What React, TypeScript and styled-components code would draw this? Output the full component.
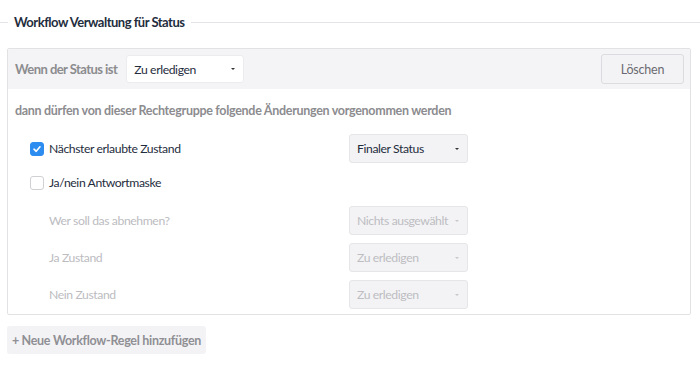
import React from "react";
import styled, { createGlobalStyle } from "styled-components";

const Global = createGlobalStyle`
  html, body { margin: 0; padding: 0; background: #fff; }
  body { font-family: Lato, "Open Sans", sans-serif; color: #1f2d3d; }
  * { box-sizing: border-box; }
`;

const Page = styled.div`
  width: 700px;
  height: 367px;
  padding-top: 14px;
  display: flex;
  flex-direction: column;
`;

const Legend = styled.div`
  display: flex;
  align-items: center;
  height: 16px;
  gap: 6px;
  &::before {
    content: "";
    width: 8px;
    height: 1px;
    background: #e4e4e7;
  }
  &::after {
    content: "";
    flex: 1;
    height: 1px;
    background: #e4e4e7;
  }
`;

const LegendText = styled.span`
  font-weight: 700;
  font-size: 13px;
  color: #1f2d3d;
  letter-spacing: -0.5px;
`;

const Panel = styled.div`
  margin: 18px 9px 0 7px;
  border: 1px solid #e2e2e5;
  border-radius: 2px;
  height: 267px;
  display: flex;
  flex-direction: column;
`;

const Header = styled.div`
  height: 40px;
  background: #f4f4f6;
  display: flex;
  align-items: center;
  padding: 0 6px 0 7px;
  gap: 9px;
`;

const HeaderLabel = styled.span`
  font-weight: 700;
  font-size: 13px;
  color: #8c8c8f;
  letter-spacing: -0.55px;
`;

const Select = styled.div<{ $variant?: "white" | "grey" | "disabled" }>`
  width: ${(p) => (p.$variant === "white" ? "118px" : "119px")};
  height: ${(p) => (p.$variant === "white" ? "28px" : "29px")};
  border-radius: 3px;
  border: 1px solid ${(p) => (p.$variant === "white" ? "#ececef" : "#e6e6e9")};
  background: ${(p) => (p.$variant === "white" ? "#fff" : "#f3f3f5")};
  color: ${(p) => (p.$variant === "disabled" ? "#bdbdc2" : "#1f2d3d")};
  font-size: 12.2px;
  display: flex;
  align-items: center;
  justify-content: space-between;
  padding: 0 8px 0 7px;
  letter-spacing: -0.4px;
  white-space: nowrap;
  &::after {
    content: "";
    flex: none;
    margin-left: 4px;
    border-left: 2px solid transparent;
    border-right: 2px solid transparent;
    border-top: 2px solid ${(p) => (p.$variant === "disabled" ? "#c8c8cc" : "#333")};
  }
`;

const Spacer = styled.div`
  flex: 1;
`;

const Button = styled.div`
  width: 83px;
  height: 30px;
  border: 1px solid #dcdce0;
  border-radius: 3px;
  background: #f3f3f5;
  color: #6a6a70;
  font-size: 12.5px;
  letter-spacing: -0.2px;
  display: flex;
  align-items: center;
  justify-content: center;
`;

const Body = styled.div`
  display: flex;
  flex-direction: column;
  padding: 11px 0 0 7px;
`;

const Intro = styled.div`
  font-weight: 700;
  font-size: 12.5px;
  color: #8c8c8f;
  letter-spacing: -0.3px;
  height: 20px;
  display: flex;
  align-items: center;
  margin-bottom: 14px;
`;

const Rows = styled.div`
  display: flex;
  flex-direction: column;
  gap: 8px;
  padding-left: 15px;
`;

const Row = styled.div<{ $indent?: boolean; $short?: boolean }>`
  display: grid;
  align-items: center;
  height: ${(p) => (p.$short ? "27px" : "29px")};
  padding-bottom: ${(p) => (p.$short ? "4px" : "0")};
  padding-left: ${(p) => (p.$indent ? "19px" : "0")};
  grid-template-columns: ${(p) => (p.$indent ? "300px 120px" : "319px 120px")};
`;

const CheckLabel = styled.label`
  display: flex;
  align-items: center;
  gap: 5px;
  font-size: 12.2px;
  color: #1f2d3d;
  letter-spacing: -0.4px;
`;

const Box = styled.span<{ $checked?: boolean }>`
  width: 14px;
  height: 14px;
  border-radius: 3px;
  border: 1px solid ${(p) => (p.$checked ? "#2d8cf0" : "#cfcfd4")};
  background: ${(p) => (p.$checked ? "#2d8cf0" : "#fff")};
  display: inline-flex;
  align-items: center;
  justify-content: center;
`;

const MutedLabel = styled.span`
  font-size: 12.2px;
  color: #bcbcc1;
  letter-spacing: -0.4px;
`;

const AddButton = styled.div`
  margin: 11px 0 0 7px;
  width: 199px;
  height: 28px;
  border-radius: 3px;
  background: #f3f3f5;
  color: #8f8f94;
  font-weight: 700;
  font-size: 12.5px;
  letter-spacing: -0.3px;
  display: flex;
  align-items: center;
  justify-content: center;
`;

const Check = () => (
  <svg width="10" height="10" viewBox="0 0 10 10">
    <path d="M2 5.2 L4.2 7.3 L8 2.8" stroke="#fff" strokeWidth="1.6" fill="none" strokeLinecap="round" strokeLinejoin="round" />
  </svg>
);

export default function App() {
  return (
    <Page>
      <Global />
      <Legend>
        <LegendText>Workflow Verwaltung für Status</LegendText>
      </Legend>
      <Panel>
        <Header>
          <HeaderLabel>Wenn der Status ist</HeaderLabel>
          <Select $variant="white">Zu erledigen</Select>
          <Spacer />
          <Button>Löschen</Button>
        </Header>
        <Body>
          <Intro>dann dürfen von dieser Rechtegruppe folgende Änderungen vorgenommen werden</Intro>
          <Rows>
            <Row>
              <CheckLabel>
                <Box $checked>
                  <Check />
                </Box>
                Nächster erlaubte Zustand
              </CheckLabel>
              <Select $variant="grey">Finaler Status</Select>
            </Row>
            <Row $short>
              <CheckLabel>
                <Box />
                Ja/nein Antwortmaske
              </CheckLabel>
            </Row>
            <Row $indent>
              <MutedLabel>Wer soll das abnehmen?</MutedLabel>
              <Select $variant="disabled">Nichts ausgewählt</Select>
            </Row>
            <Row $indent>
              <MutedLabel>Ja Zustand</MutedLabel>
              <Select $variant="disabled">Zu erledigen</Select>
            </Row>
            <Row $indent>
              <MutedLabel>Nein Zustand</MutedLabel>
              <Select $variant="disabled">Zu erledigen</Select>
            </Row>
          </Rows>
        </Body>
      </Panel>
      <AddButton>+ Neue Workflow-Regel hinzufügen</AddButton>
    </Page>
  );
}
